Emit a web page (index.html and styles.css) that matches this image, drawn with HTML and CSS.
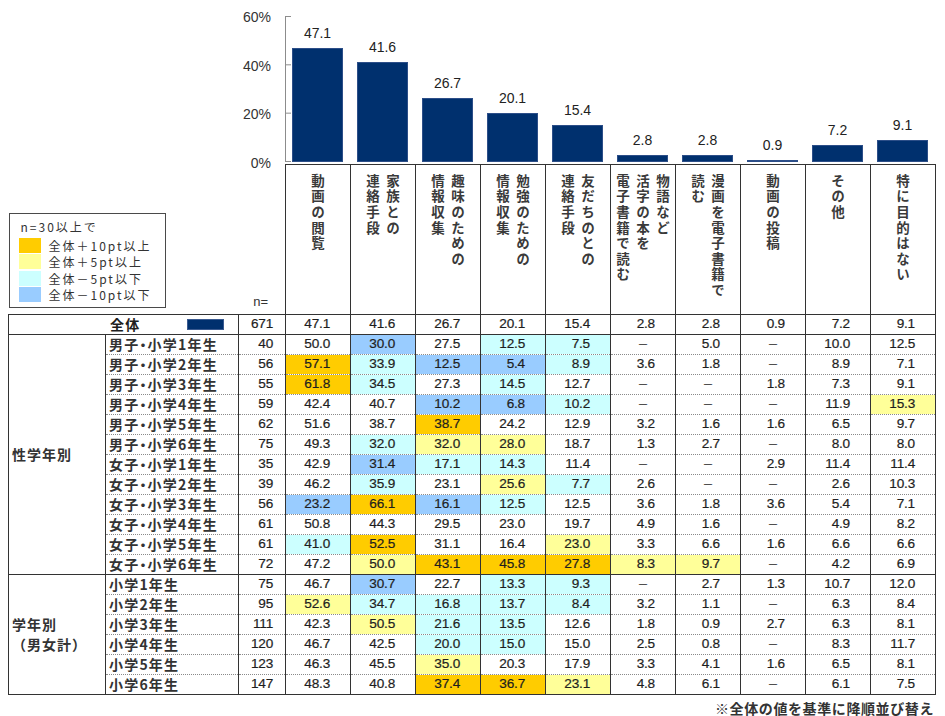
FILE: index.html
```html
<!DOCTYPE html>
<html lang="ja">
<head>
<meta charset="utf-8">
<title>利用目的</title>
<link rel="stylesheet" href="styles.css">
</head>
<body>
<div class="page">
  <div class="chart">
    <div class="yaxis">
      <span>60%</span><span>40%</span><span>20%</span><span>0%</span>
    </div>
    <div class="plot">
      <div class="bars">
        <div class="bcol"><span class="val">47.1</span><div class="bar" style="height:113.8px"></div></div>
        <div class="bcol"><span class="val">41.6</span><div class="bar" style="height:100.5px"></div></div>
        <div class="bcol"><span class="val">26.7</span><div class="bar" style="height:64.5px"></div></div>
        <div class="bcol"><span class="val">20.1</span><div class="bar" style="height:48.6px"></div></div>
        <div class="bcol"><span class="val">15.4</span><div class="bar" style="height:37.2px"></div></div>
        <div class="bcol"><span class="val">2.8</span><div class="bar" style="height:6.8px"></div></div>
        <div class="bcol"><span class="val">2.8</span><div class="bar" style="height:6.8px"></div></div>
        <div class="bcol"><span class="val">0.9</span><div class="bar" style="height:2.4px"></div></div>
        <div class="bcol"><span class="val">7.2</span><div class="bar" style="height:17.4px"></div></div>
        <div class="bcol"><span class="val">9.1</span><div class="bar" style="height:22px"></div></div>
      </div>
    </div>
  </div>

  <table class="tbl">
    <colgroup>
      <col class="w-grp"><col class="w-lb"><col class="w-n">
      <col class="w-d"><col class="w-d"><col class="w-d"><col class="w-d"><col class="w-d">
      <col class="w-d"><col class="w-d"><col class="w-d"><col class="w-d"><col class="w-d">
    </colgroup>
    <tr class="head">
      <td class="corner" colspan="3">
        <div class="corner-in">
          <div class="legend">
            <div class="lg-title">n=30以上で</div>
            <div class="lg-row"><i class="sw o"></i><span>全体＋10pt以上</span></div>
            <div class="lg-row"><i class="sw y"></i><span>全体＋5pt以上</span></div>
            <div class="lg-row"><i class="sw c"></i><span>全体－5pt以下</span></div>
            <div class="lg-row"><i class="sw b"></i><span>全体－10pt以下</span></div>
          </div>
          <span class="nlabel">n=</span>
        </div>
      </td>
      <td class="hc"><div class="vt">動画の閲覧</div></td>
      <td class="hc"><div class="vt">家族との<br>連絡手段</div></td>
      <td class="hc"><div class="vt">趣味のための<br>情報収集</div></td>
      <td class="hc"><div class="vt">勉強のための<br>情報収集</div></td>
      <td class="hc"><div class="vt">友だちのとの<br>連絡手段</div></td>
      <td class="hc"><div class="vt">物語など<br>活字の本を<br>電子書籍で読む</div></td>
      <td class="hc"><div class="vt">漫画を電子書籍で<br>読む</div></td>
      <td class="hc"><div class="vt">動画の投稿</div></td>
      <td class="hc"><div class="vt">その他</div></td>
      <td class="hc"><div class="vt">特に目的はない</div></td>
    </tr>
    <tr class="total">
      <td class="tl" colspan="2"><div class="tl-in"><span>全体</span><i class="navy"></i></div></td>
      <td class="n">671</td>
      <td class="v">47.1</td><td class="v">41.6</td><td class="v">26.7</td><td class="v">20.1</td><td class="v">15.4</td>
      <td class="v">2.8</td><td class="v">2.8</td><td class="v">0.9</td><td class="v">7.2</td><td class="v">9.1</td>
    </tr>

    <tr>
      <td class="grp end" rowspan="12">性学年別</td>
      <td class="lb">男子・小学1年生</td><td class="n">40</td>
      <td class="v">50.0</td><td class="v b">30.0</td><td class="v">27.5</td><td class="v c">12.5</td><td class="v c">7.5</td>
      <td class="v d">－</td><td class="v">5.0</td><td class="v d">－</td><td class="v">10.0</td><td class="v">12.5</td>
    </tr>
    <tr>
      <td class="lb">男子・小学2年生</td><td class="n">56</td>
      <td class="v o">57.1</td><td class="v c">33.9</td><td class="v b">12.5</td><td class="v b">5.4</td><td class="v c">8.9</td>
      <td class="v">3.6</td><td class="v">1.8</td><td class="v d">－</td><td class="v">8.9</td><td class="v">7.1</td>
    </tr>
    <tr>
      <td class="lb">男子・小学3年生</td><td class="n">55</td>
      <td class="v o">61.8</td><td class="v c">34.5</td><td class="v">27.3</td><td class="v c">14.5</td><td class="v">12.7</td>
      <td class="v d">－</td><td class="v d">－</td><td class="v">1.8</td><td class="v">7.3</td><td class="v">9.1</td>
    </tr>
    <tr>
      <td class="lb">男子・小学4年生</td><td class="n">59</td>
      <td class="v">42.4</td><td class="v">40.7</td><td class="v b">10.2</td><td class="v b">6.8</td><td class="v c">10.2</td>
      <td class="v d">－</td><td class="v d">－</td><td class="v d">－</td><td class="v">11.9</td><td class="v y">15.3</td>
    </tr>
    <tr>
      <td class="lb">男子・小学5年生</td><td class="n">62</td>
      <td class="v">51.6</td><td class="v">38.7</td><td class="v o">38.7</td><td class="v">24.2</td><td class="v">12.9</td>
      <td class="v">3.2</td><td class="v">1.6</td><td class="v">1.6</td><td class="v">6.5</td><td class="v">9.7</td>
    </tr>
    <tr>
      <td class="lb">男子・小学6年生</td><td class="n">75</td>
      <td class="v">49.3</td><td class="v c">32.0</td><td class="v y">32.0</td><td class="v y">28.0</td><td class="v">18.7</td>
      <td class="v">1.3</td><td class="v">2.7</td><td class="v d">－</td><td class="v">8.0</td><td class="v">8.0</td>
    </tr>
    <tr>
      <td class="lb">女子・小学1年生</td><td class="n">35</td>
      <td class="v">42.9</td><td class="v b">31.4</td><td class="v c">17.1</td><td class="v c">14.3</td><td class="v">11.4</td>
      <td class="v d">－</td><td class="v d">－</td><td class="v">2.9</td><td class="v">11.4</td><td class="v">11.4</td>
    </tr>
    <tr>
      <td class="lb">女子・小学2年生</td><td class="n">39</td>
      <td class="v">46.2</td><td class="v c">35.9</td><td class="v">23.1</td><td class="v y">25.6</td><td class="v c">7.7</td>
      <td class="v">2.6</td><td class="v d">－</td><td class="v d">－</td><td class="v">2.6</td><td class="v">10.3</td>
    </tr>
    <tr>
      <td class="lb">女子・小学3年生</td><td class="n">56</td>
      <td class="v b">23.2</td><td class="v o">66.1</td><td class="v b">16.1</td><td class="v c">12.5</td><td class="v">12.5</td>
      <td class="v">3.6</td><td class="v">1.8</td><td class="v">3.6</td><td class="v">5.4</td><td class="v">7.1</td>
    </tr>
    <tr>
      <td class="lb">女子・小学4年生</td><td class="n">61</td>
      <td class="v">50.8</td><td class="v">44.3</td><td class="v">29.5</td><td class="v">23.0</td><td class="v">19.7</td>
      <td class="v">4.9</td><td class="v">1.6</td><td class="v d">－</td><td class="v">4.9</td><td class="v">8.2</td>
    </tr>
    <tr>
      <td class="lb">女子・小学5年生</td><td class="n">61</td>
      <td class="v c">41.0</td><td class="v o">52.5</td><td class="v">31.1</td><td class="v">16.4</td><td class="v y">23.0</td>
      <td class="v">3.3</td><td class="v">6.6</td><td class="v">1.6</td><td class="v">6.6</td><td class="v">6.6</td>
    </tr>
    <tr class="last">
      <td class="lb">女子・小学6年生</td><td class="n">72</td>
      <td class="v">47.2</td><td class="v y">50.0</td><td class="v o">43.1</td><td class="v o">45.8</td><td class="v o">27.8</td>
      <td class="v y">8.3</td><td class="v y">9.7</td><td class="v d">－</td><td class="v">4.2</td><td class="v">6.9</td>
    </tr>

    <tr>
      <td class="grp end" rowspan="6">学年別<br>（男女計）</td>
      <td class="lb">小学1年生</td><td class="n">75</td>
      <td class="v">46.7</td><td class="v b">30.7</td><td class="v">22.7</td><td class="v c">13.3</td><td class="v c">9.3</td>
      <td class="v d">－</td><td class="v">2.7</td><td class="v">1.3</td><td class="v">10.7</td><td class="v">12.0</td>
    </tr>
    <tr>
      <td class="lb">小学2年生</td><td class="n">95</td>
      <td class="v y">52.6</td><td class="v c">34.7</td><td class="v c">16.8</td><td class="v c">13.7</td><td class="v c">8.4</td>
      <td class="v">3.2</td><td class="v">1.1</td><td class="v d">－</td><td class="v">6.3</td><td class="v">8.4</td>
    </tr>
    <tr>
      <td class="lb">小学3年生</td><td class="n">111</td>
      <td class="v">42.3</td><td class="v y">50.5</td><td class="v c">21.6</td><td class="v c">13.5</td><td class="v">12.6</td>
      <td class="v">1.8</td><td class="v">0.9</td><td class="v">2.7</td><td class="v">6.3</td><td class="v">8.1</td>
    </tr>
    <tr>
      <td class="lb">小学4年生</td><td class="n">120</td>
      <td class="v">46.7</td><td class="v">42.5</td><td class="v c">20.0</td><td class="v c">15.0</td><td class="v">15.0</td>
      <td class="v">2.5</td><td class="v">0.8</td><td class="v d">－</td><td class="v">8.3</td><td class="v">11.7</td>
    </tr>
    <tr>
      <td class="lb">小学5年生</td><td class="n">123</td>
      <td class="v">46.3</td><td class="v">45.5</td><td class="v y">35.0</td><td class="v">20.3</td><td class="v">17.9</td>
      <td class="v">3.3</td><td class="v">4.1</td><td class="v">1.6</td><td class="v">6.5</td><td class="v">8.1</td>
    </tr>
    <tr class="last">
      <td class="lb">小学6年生</td><td class="n">147</td>
      <td class="v">48.3</td><td class="v">40.8</td><td class="v o">37.4</td><td class="v o">36.7</td><td class="v y">23.1</td>
      <td class="v">4.8</td><td class="v">6.1</td><td class="v d">－</td><td class="v">6.1</td><td class="v">7.5</td>
    </tr>
  </table>

  <p class="note">※全体の値を基準に降順並び替え</p>
</div>
</body>
</html>
```

FILE: styles.css
```css
html, body {
  margin: 0;
  padding: 0;
  background: #ffffff;
}

.page {
  width: 945px;
  color: #333333;
  font-family: "Liberation Sans", "Noto Sans CJK JP", sans-serif;
}

/* ---------- chart ---------- */
.chart {
  display: flex;
  height: 164px;
}

.yaxis {
  width: 285px;
  box-sizing: border-box;
  padding-right: 14px;
  padding-top: 9px;
  display: flex;
  flex-direction: column;
  align-items: flex-end;
  gap: 32.5px;
  font-size: 14px;
  line-height: 16px;
  color: #333;
}

.plot {
  width: 650px;
  height: 146px;
  margin-top: 16px;
  box-sizing: border-box;
  border-left: 1px solid #8c8c8c;
  background-image: linear-gradient(to bottom, #8c8c8c 1px, transparent 1px);
  background-size: 5px 48.33px;
  background-repeat: repeat-y;
}

.bars {
  display: flex;
  height: 100%;
  margin-left: -1px;
}

.bcol {
  width: 65px;
  flex: none;
  display: flex;
  flex-direction: column;
  justify-content: flex-end;
  align-items: center;
}

.val {
  font-size: 14px;
  line-height: 16px;
  margin-bottom: 7px;
  color: #222;
}

.bar {
  width: 51px;
  box-sizing: border-box;
  background: #00306e;
  border: 1px solid #2c4e88;
}

/* ---------- table ---------- */
.tbl {
  border-collapse: collapse;
  table-layout: fixed;
  width: 927px;
  margin-left: 8px;
}

.w-grp { width: 97px; }
.w-lb { width: 133px; }
.w-n { width: 47px; }
.w-d { width: 65px; }

.tbl td {
  padding: 0;
  height: 19px;
  line-height: 18px;
  border-left: 1px solid #333;
  border-right: 1px solid #333;
  border-bottom: 1px dotted #8a8a8a;
  font-size: 13.6px;
  letter-spacing: -0.2px;
  color: #1e1e1e;
  -webkit-text-stroke: 0.2px #1e1e1e;
  white-space: nowrap;
  overflow: hidden;
}

.tbl tr.last td,
.tbl tr.total td,
.tbl td.end {
  border-bottom: 1px solid #333;
}

/* header row */
.tbl tr.head td {
  height: auto;
  border: 1px solid #333;
  -webkit-text-stroke: 0;
}

.tbl tr.head td.corner {
  border-left: none;
  border-top: none;
  border-right: 1px solid #333;
  border-bottom: 1px solid #333;
  vertical-align: bottom;
}

.corner-in {
  height: 149px;
  display: flex;
  justify-content: space-between;
  align-items: flex-end;
}

.legend {
  width: 157px;
  height: 95px;
  box-sizing: border-box;
  margin-bottom: 6px;
  border: 1px solid #4a4a4a;
  padding: 5px 0 0 9px;
  font-family: "Noto Sans CJK JP", sans-serif;
  font-size: 12px;
  letter-spacing: 2px;
  color: #333;
  display: flex;
  flex-direction: column;
  gap: 1.6px;
}

.lg-title {
  line-height: 16px;
  padding-left: 2px;
  margin-bottom: 1.6px;
}

.lg-row {
  display: flex;
  align-items: center;
  height: 15px;
  line-height: 15px;
}

.sw {
  width: 22px;
  height: 15px;
  margin-right: 8px;
  flex: none;
}

.nlabel {
  font-size: 13px;
  line-height: 16px;
  letter-spacing: 0;
  margin-right: 17px;
  margin-bottom: 4px;
  color: #333;
}

.tbl td.hc {
  vertical-align: top;
  text-align: center;
  padding-top: 9px;
}

.vt {
  display: inline-block;
  writing-mode: vertical-rl;
  white-space: nowrap;
  text-align: start;
  font-family: "Noto Sans CJK JP", sans-serif;
  font-weight: bold;
  font-size: 13.5px;
  line-height: 20px;
  letter-spacing: 2.1px;
  color: #3a3a3a;
}

/* total row */
.tl-in {
  display: flex;
  align-items: center;
  padding-left: 101px;
  padding-right: 14px;
}

.tl-in span {
  font-family: "Noto Sans CJK JP", sans-serif;
  font-weight: bold;
  font-size: 14px;
  letter-spacing: 1.2px;
  -webkit-text-stroke: 0;
}

.navy {
  margin-left: auto;
  width: 37px;
  height: 11px;
  box-sizing: border-box;
  background: #00306e;
  border: 1px solid #3a5a90;
}

/* body cells */
.tbl td.grp {
  padding-left: 3px;
  font-family: "Noto Sans CJK JP", sans-serif;
  font-weight: bold;
  font-size: 14px;
  line-height: 20px;
  letter-spacing: 1px;
  vertical-align: middle;
  color: #333;
  -webkit-text-stroke: 0;
}

.tbl td.lb {
  padding-left: 3px;
  font-family: "Noto Sans CJK JP", sans-serif;
  font-weight: bold;
  font-size: 14px;
  letter-spacing: 1.2px;
  font-feature-settings: "palt";
  color: #333;
  -webkit-text-stroke: 0;
}

.tbl td.n {
  text-align: right;
  padding-right: 12px;
}

.tbl td.v {
  text-align: right;
  padding-right: 20px;
}

.tbl td.d {
  text-align: center;
  padding-right: 0;
  font-family: "Noto Sans CJK JP", sans-serif;
  font-size: 11px;
}

.o { background: #ffcc00; }
.y { background: #ffff99; }
.c { background: #ccffff; }
.b { background: #99ccff; }

.note {
  margin: 4px 0 0 0;
  width: 934px;
  text-align: right;
  font-family: "Noto Sans CJK JP", sans-serif;
  font-weight: bold;
  font-size: 14px;
  line-height: 18px;
  letter-spacing: 0.6px;
  color: #333;
}
```
